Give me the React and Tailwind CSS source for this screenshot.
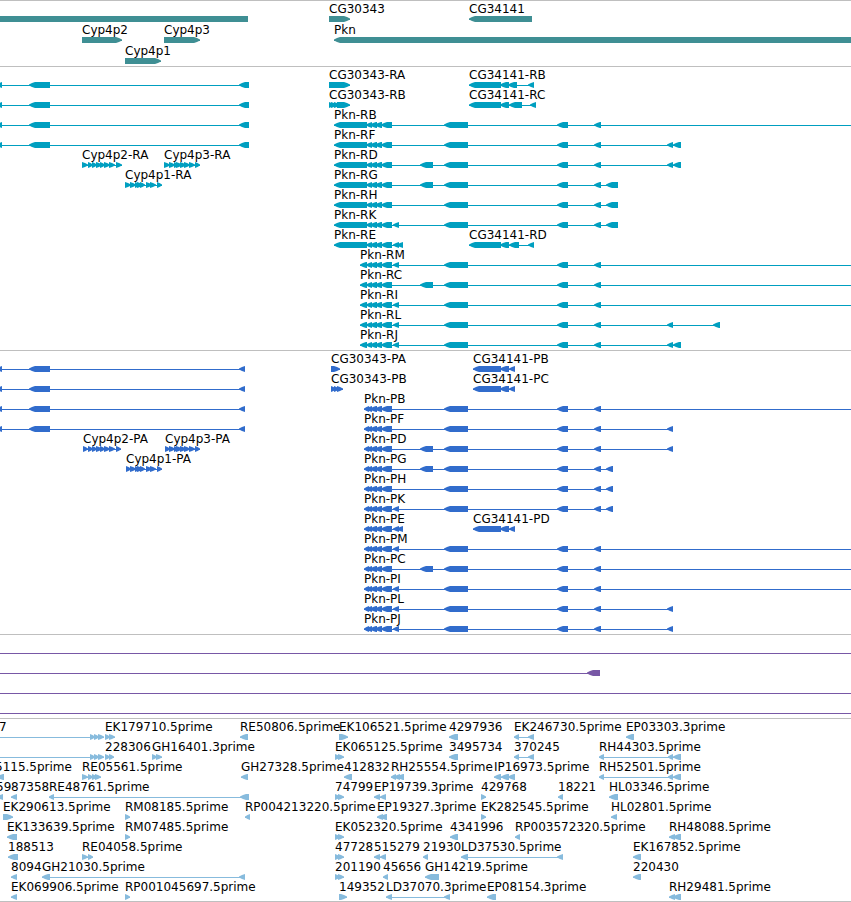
const left = (label, ...exons) => ({ label, exons, strand: -1 });
const right = (label, ...exons) => ({ label, exons, strand: 1 });

// features running past the right edge of the view
const OFF = [4000, 4010];

const geneRows = [
  [
    { exons: [[-40, 248]], strand: 0 },
    right('CG30343', [329, 350]),
    left('CG34141', [469, 532])
  ],
  [right('Cyp4p2', [82, 122]), right('Cyp4p3', [164, 200]), left('Pkn', [334, 4000])],
  [right('Cyp4p1', [125, 161])]
];

const smallExons = [[366, 372], [370, 377], [375, 382], [381, 392]];
const trunk = [[444, 468], [557, 568], [594, 601]];
const longUtr = [[334, 367], ...smallExons];
const shortUtr = [[360, 367], ...smallExons];
const coding = [[364, 369], ...smallExons];
const extra = [393, 399];
const middle = [420, 433];
const farPair = [[667, 673], [673, 681]];

const leftTranscript = () => left('', [-40, -30], [-4, 2], [29, 50], [239, 249]);
const leftProtein = () => left('', [-40, -30], [-4, 2], [29, 50], [239, 245]);

const transcriptRows = [
  [
    leftTranscript(),
    right('CG30343-RA', [329, 350]),
    left('CG34141-RB', [469, 501], [500, 509], [508, 517], [528, 534])
  ],
  [
    leftTranscript(),
    right('CG30343-RB', [329, 334], [331, 337], [334, 340], [337, 350]),
    left('CG34141-RC', [469, 501], [500, 509], [509, 522], [530, 536])
  ],
  [leftTranscript(), left('Pkn-RB', ...longUtr, ...trunk, OFF)],
  [leftTranscript(), left('Pkn-RF', ...longUtr, ...trunk, ...farPair)],
  [
    right('Cyp4p2-RA', [82, 88], [88, 93], [92, 97], [96, 102], [100, 105], [104, 110], [109, 115], [116, 122]),
    right('Cyp4p3-RA', [164, 170], [169, 175], [174, 179], [176, 182], [180, 186], [184, 190], [189, 195], [195, 200]),
    left('Pkn-RD', ...longUtr, middle, ...trunk, ...farPair)
  ],
  [
    right('Cyp4p1-RA', [125, 131], [130, 136], [135, 140], [137, 143], [140, 145], [146, 152], [150, 156], [157, 162]),
    left('Pkn-RG', ...longUtr, middle, ...trunk, [606, 618])
  ],
  [left('Pkn-RH', ...longUtr, ...trunk, [606, 618])],
  [left('Pkn-RK', ...longUtr, extra, ...trunk, [606, 618])],
  [
    left('Pkn-RE', ...longUtr, extra, [397, 403]),
    left('CG34141-RD', [469, 501], [500, 509], [509, 519], [528, 534])
  ],
  [left('Pkn-RM', ...shortUtr, extra, ...trunk, OFF)],
  [left('Pkn-RC', ...shortUtr, middle, ...trunk, OFF)],
  [left('Pkn-RI', ...shortUtr, extra, ...trunk, OFF)],
  [left('Pkn-RL', ...shortUtr, extra, ...trunk, [667, 673], [713, 720])],
  [left('Pkn-RJ', ...shortUtr, extra, ...trunk, ...farPair)]
];

const proteinRows = [
  [
    leftProtein(),
    right('CG30343-PA', [331, 340]),
    left('CG34141-PB', [473, 501], [500, 509], [509, 515])
  ],
  [
    leftProtein(),
    right('CG30343-PB', [331, 336], [334, 339], [337, 343]),
    left('CG34141-PC', [473, 501], [500, 509], [509, 515])
  ],
  [leftProtein(), left('Pkn-PB', ...coding, ...trunk, OFF)],
  [leftProtein(), left('Pkn-PF', ...coding, ...trunk, [667, 673])],
  [
    right('Cyp4p2-PA', [83, 88], [88, 93], [92, 97], [96, 102], [100, 105], [104, 110], [109, 115], [116, 121]),
    right('Cyp4p3-PA', [165, 170], [169, 175], [174, 179], [176, 182], [180, 186], [184, 190], [189, 195], [195, 200]),
    left('Pkn-PD', ...coding, middle, ...trunk, [667, 673])
  ],
  [
    right('Cyp4p1-PA', [126, 131], [130, 136], [135, 140], [137, 143], [140, 145], [146, 152], [150, 156], [157, 162]),
    left('Pkn-PG', ...coding, middle, ...trunk, [606, 613])
  ],
  [left('Pkn-PH', ...coding, ...trunk, [606, 613])],
  [left('Pkn-PK', ...coding, extra, ...trunk, [606, 613])],
  [
    left('Pkn-PE', ...coding, extra, [397, 403]),
    left('CG34141-PD', [473, 501], [500, 509], [509, 515])
  ],
  [left('Pkn-PM', ...coding, extra, ...trunk, OFF)],
  [left('Pkn-PC', ...coding, middle, ...trunk, OFF)],
  [left('Pkn-PI', ...coding, extra, ...trunk, OFF)],
  [left('Pkn-PL', ...coding, extra, ...trunk, [667, 673])],
  [left('Pkn-PJ', ...coding, extra, ...trunk, [667, 673])]
];

const spanRows = [
  [left('', [-40, -30], OFF)],
  [left('', [-40, -30], [587, 600])],
  [left('', [-40, -30], OFF)],
  [left('', [-40, -30], OFF)]
];

const estRows = [
  [
    { ...right('7', [-40, -30], [90, 95], [94, 99], [98, 104]), labelX: -1 },
    right('EK179710.5prime', [105, 110], [109, 115]),
    left('RE50806.5prime', [240, 248]),
    right('EK106521.5prime', [339, 348]),
    left('4297936', [449, 458]),
    left('EK246730.5prime', [514, 519], [528, 534]),
    left('EP03303.3prime', [626, 634])
  ],
  [
    right('', [-40, -30], [90, 95], [94, 99], [98, 104]),
    right('228306', [105, 110], [109, 114]),
    right('GH16401.3prime', [152, 157], [156, 162]),
    right('EK065125.5prime', [335, 340], [338, 344]),
    left('3495734', [449, 458]),
    left('370245', [514, 519], [528, 534]),
    left('RH44303.5prime', [599, 604], [668, 673], [673, 681])
  ],
  [
    { ...left('5115.5prime', [-3, 4]), labelX: -5 },
    right('RE05561.5prime', [82, 88], [88, 93], [92, 97], [95, 101]),
    left('GH27328.5prime', [241, 248]),
    left('412832', [344, 352]),
    left('RH25554.5prime', [391, 396], [394, 400], [397, 404]),
    left('IP16973.5prime', [494, 501], [501, 509], [508, 515]),
    left('RH52501.5prime', [599, 604], [668, 673], [673, 681])
  ],
  [
    { ...left('59', [-3, 3]), labelX: -4 },
    left('87358', [11, 17]),
    left('RE48761.5prime', [49, 54], [240, 249]),
    right('74799', [335, 340], [338, 344]),
    left('EP19739.3prime', [374, 380], [380, 386]),
    right('429768', [481, 486]),
    left('18221', [558, 563]),
    left('HL03346.5prime', [609, 618])
  ],
  [
    right('EK290613.5prime', [3, 13]),
    right('RM08185.5prime', [125, 130]),
    left('RP004213220.5prime', [245, 250]),
    left('EP19327.3prime', [377, 383], [380, 387]),
    right('EK282545.5prime', [481, 486]),
    left('HL02801.5prime', [611, 617])
  ],
  [
    left('EK133639.5prime', [7, 17]),
    right('RM07485.5prime', [125, 130]),
    right('EK052320.5prime', [335, 340], [338, 344]),
    left('4341996', [450, 458]),
    left('RP003572320.5prime', [515, 520]),
    left('RH48088.5prime', [669, 675], [673, 681])
  ],
  [
    left('188513', [8, 18]),
    right('RE04058.5prime', [82, 88], [88, 93]),
    right('47728', [335, 340], [338, 344]),
    left('515279', [374, 380], [380, 386]),
    left('21930', [423, 428]),
    left('LD37530.5prime', [461, 468], [557, 563]),
    left('EK167852.5prime', [633, 641])
  ],
  [
    left('8094', [11, 17]),
    left('GH21030.5prime', [42, 50], [239, 245]),
    right('201190', [335, 340], [338, 344]),
    left('45656', [383, 388]),
    left('GH14219.5prime', [425, 439]),
    left('220430', [633, 641])
  ],
  [
    left('EK069906.5prime', [11, 17]),
    right('RP001045697.5prime', [125, 130]),
    right('149352', [339, 347]),
    left('LD37070.3prime', [386, 392], [444, 450]),
    left('EP08154.3prime', [487, 496]),
    left('RH29481.5prime', [669, 675], [673, 681])
  ]
];

// block with a rounded arrow head on the side the strand points to
function exonPath([start, end], strand) {
  const tip = Math.min(6, end - start);
  if (strand < 0) {
    return `M${start} 3.4V2.6L${start + tip / 2} 1L${start + tip} 0H${end}V6H${start + tip}L${start + tip / 2} 5Z`;
  }
  if (strand > 0) {
    return `M${end} 3.4V2.6L${end - tip / 2} 1L${end - tip} 0H${start}V6H${end - tip}L${end - tip / 2} 5Z`;
  }
  return `M${start} 0H${end}V6H${start}Z`;
}

function Glyph({ exons, strand }) {
  const start = exons[0][0];
  const end = exons[exons.length - 1][1];

  return (
    <g>
      <rect x={start} y="3" width={end - start} height="1" />
      {exons.map((exon, i) => (
        <path key={i} d={exonPath(exon, strand)} />
      ))}
    </g>
  );
}

function FeatureRow({ features, height }) {
  return (
    <div className={`relative flex flex-col ${height}`}>
      <svg className="mt-[15px] h-1.5 w-full shrink-0 overflow-visible" fill="currentColor">
        {features.map((feature, i) => (
          <Glyph key={i} exons={feature.exons} strand={feature.strand} />
        ))}
      </svg>
      {features.map((feature, i) => feature.label && (
        <span
          key={i}
          className="absolute top-0 whitespace-nowrap text-xs leading-4 text-black"
          style={{ left: feature.labelX ?? feature.exons[0][0] }}
        >
          {feature.label}
        </span>
      ))}
    </div>
  );
}

function Track({ rows, className, height = 'h-5' }) {
  return (
    <section className={`overflow-hidden border-t border-[#bfbfbf] ${className}`}>
      {rows.map((features, i) => (
        <FeatureRow key={i} features={features} height={height} />
      ))}
    </section>
  );
}

export default function App() {
  return (
    <main className="w-full overflow-hidden border-b border-[#bfbfbf] bg-white font-['DejaVu_Sans',sans-serif]">
      <Track rows={geneRows} height="h-[21px]" className="pb-0.5 text-[#3f8f94]" />
      <Track rows={transcriptRows} className="pb-[3px] text-[#009fc0]" />
      <Track rows={proteinRows} className="pb-[3px] text-[#316ccc]" />
      <Track rows={spanRows} className="pb-[3px] text-[#7858a6]" />
      <Track rows={estRows} className="pb-0.5 text-[#87bbdd]" />
    </main>
  );
}
